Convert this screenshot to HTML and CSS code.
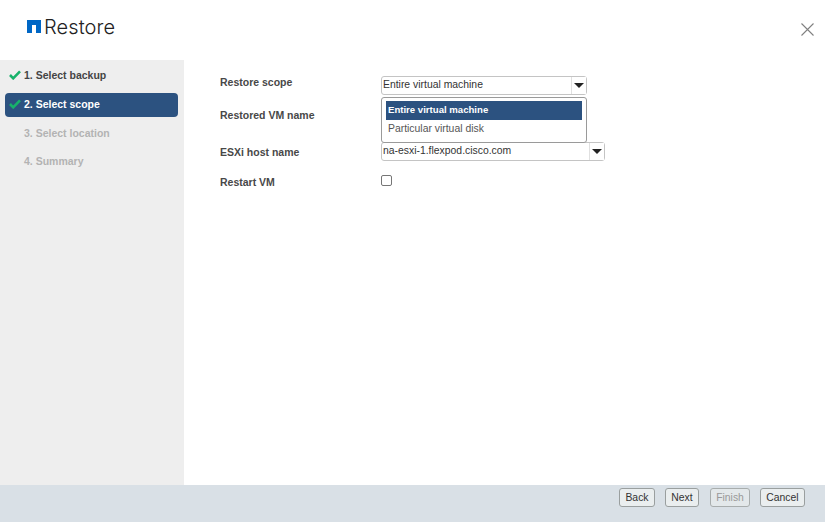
FILE: index.html
```html
<!DOCTYPE html>
<html lang="en">
<head>
<meta charset="utf-8">
<title>Restore</title>
<link rel="stylesheet" href="styles.css">
</head>
<body>
<div class="dialog">
  <header class="header">
    <div class="title">
      <svg class="logo" width="14" height="13" viewBox="0 0 14 13"><path fill="#0067c5" d="M0 0H14V13H9V5H5V13H0Z"/></svg>
      <span class="title-text">Restore</span>
    </div>
    <svg class="close" width="13" height="13" viewBox="0 0 13 13"><path d="M.5.5 12.5 12.5M12.5.5.5 12.5" stroke="#808080" stroke-width="1.1" fill="none"/></svg>
  </header>
  <div class="main">
    <nav class="steps">
      <div class="step done">
        <svg class="check" width="12" height="10" viewBox="0 0 12 10"><path d="M1 5 4.2 8.3 11 1.3" stroke="#17b26a" stroke-width="2.6" fill="none"/></svg>
        <span>1. Select backup</span>
      </div>
      <div class="step active">
        <svg class="check" width="12" height="10" viewBox="0 0 12 10"><path d="M1 5 4.2 8.3 11 1.3" stroke="#17b26a" stroke-width="2.6" fill="none"/></svg>
        <span>2. Select scope</span>
      </div>
      <div class="step disabled"><span>3. Select location</span></div>
      <div class="step disabled"><span>4. Summary</span></div>
    </nav>
    <section class="content">
      <div class="form">
        <div class="label row-scope">Restore scope</div>
        <div class="field row-scope">
          <div class="select scope-select">
            <span class="select-value">Entire virtual machine</span>
            <span class="select-btn"><i class="caret"></i></span>
            <div class="menu">
              <div class="option selected">Entire virtual machine</div>
              <div class="option">Particular virtual disk</div>
            </div>
          </div>
        </div>
        <div class="label row-name">Restored VM name</div>
        <div class="field row-name"></div>
        <div class="label row-host">ESXi host name</div>
        <div class="field row-host">
          <div class="select host-select">
            <span class="select-value">na-esxi-1.flexpod.cisco.com</span>
            <span class="select-btn"><i class="caret"></i></span>
          </div>
        </div>
        <div class="label row-restart">Restart VM</div>
        <div class="field row-restart"><span class="checkbox"></span></div>
      </div>
    </section>
  </div>
  <footer class="footer">
    <button class="btn btn-back">Back</button>
    <button class="btn btn-next">Next</button>
    <button class="btn btn-finish" disabled>Finish</button>
    <button class="btn btn-cancel">Cancel</button>
  </footer>
</div>
</body>
</html>
```
FILE: styles.css
```css
* { box-sizing: border-box; }
html, body { margin: 0; padding: 0; }
body { width: 825px; height: 522px; overflow: hidden; background: #fff; font-family: "Liberation Sans", Arial, sans-serif; }
.dialog { width: 825px; height: 522px; display: flex; flex-direction: column; }

.header { height: 60px; flex: none; display: flex; justify-content: space-between; padding: 22px 11px 0 27px; }
.title { display: flex; align-items: flex-start; }
.logo { margin-top: -2px; }
.title-text { font-family: "Inter", "Liberation Sans", sans-serif; font-weight: 300; font-size: 20px; line-height: 11px; margin-left: 3px; color: #222; letter-spacing: 0.1px; }
.close { margin-top: 1px; }

.main { flex: 1; display: flex; min-height: 0; }
.steps { width: 184px; flex: none; background: #eeeeee; padding: 4px 6px 0 5px; }
.step { height: 24px; margin-bottom: 5px; display: flex; align-items: center; padding: 0 0 2px 19px; font-size: 10.5px; font-weight: bold; color: #444; position: relative; border-radius: 4px; }
.step:last-child { margin-top: -1px; }
.check { position: absolute; left: 4px; top: 6px; }
.step.active { background: #2c5280; color: #fff; }
.step.disabled { color: #b3b3b3; }

.content { flex: 1; padding: 16px 0 0 36px; }
.form { display: grid; grid-template-columns: 161px 1fr; grid-template-rows: 19px 47px 33px 20px; font-size: 10.5px; }
.label { font-weight: bold; color: #484848; font-size: 10.5px; line-height: 12px; }
.row-name.label { padding-top: 14px; }
.row-host.label { padding-top: 4px; }
.row-restart.label { padding-top: 1px; }
.select { position: relative; height: 19px; border: 1px solid #c4c4c4; border-radius: 3px; background: #fff; display: flex; justify-content: space-between; font-size: 10.4px; color: #333; }
.scope-select { width: 206px; }
.host-select { width: 224px; }
.select-value { padding-left: 1px; line-height: 15px; }
.select-btn { width: 15px; height: 17px; background: #fff; border-left: 1px solid #e0e0e0; display: flex; align-items: center; justify-content: center; }
.caret { width: 0; height: 0; border-left: 5px solid transparent; border-right: 5px solid transparent; border-top: 5px solid #222; }

.menu { position: absolute; left: -1px; top: 20px; width: 206px; height: 46px; background: #fff; border: 1px solid #9a9a9a; border-radius: 3px; padding: 3px 4px; z-index: 2; }
.option { height: 18.5px; line-height: 17px; padding-left: 2px; color: #555; font-size: 10.4px; }
.option.selected { background: #2c5280; color: #fff; font-weight: bold; font-size: 9.6px; }

.checkbox { display: block; width: 11px; height: 11px; border: 1px solid #767676; border-radius: 2px; background: #fff; }

.footer { height: 37px; flex: none; background: #d9e0e6; display: flex; padding: 3px 0 0 619px; }
.btn { height: 19px; padding: 0; border: 1px solid #9a9f9f; border-radius: 3px; background: #eaeeef; font-family: "Liberation Sans", Arial, sans-serif; font-size: 10.4px; color: #333; }
.btn-back { width: 36px; }
.btn-next { width: 34px; margin-left: 10px; }
.btn-finish { width: 40px; margin-left: 11px; color: #999; border-color: #a8adad; background: #e3e8ea; }
.btn-cancel { width: 45px; margin-left: 10px; }
```
